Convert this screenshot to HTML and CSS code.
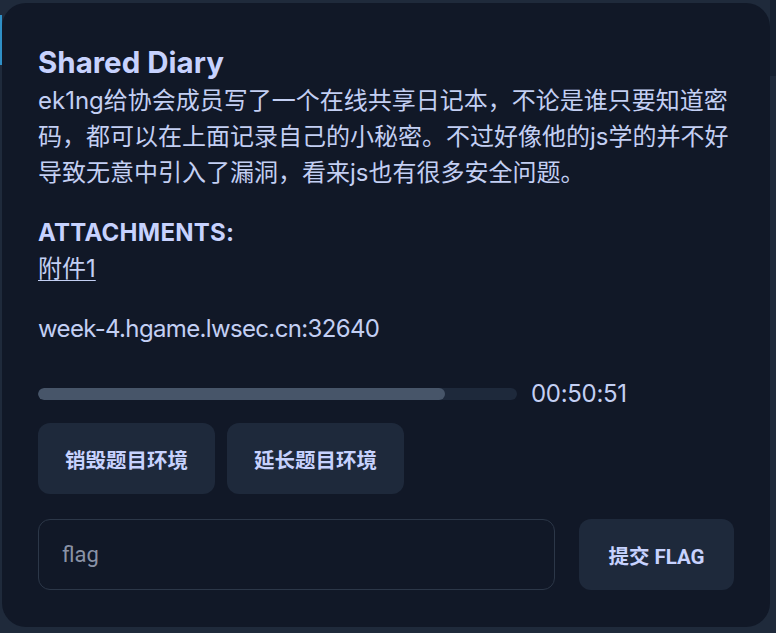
FILE: index.html
```html
<!DOCTYPE html>
<html lang="zh">
<head>
<meta charset="utf-8">
<title>Shared Diary</title>
<link rel="stylesheet" href="styles.css">
</head>
<body>
<div class="card">
  <h1 class="title">Shared Diary</h1>
  <p class="desc">ek1ng给协会成员写了一个在线共享日记本，不论是谁只要知道密码，都可以在上面记录自己的小秘密。不过好像他的js学的并不好导致无意中引入了漏洞，看来js也有很多安全问题。</p>
  <h2 class="att-title">ATTACHMENTS:</h2>
  <a class="att-link" href="#">附件1</a>
  <p class="host">week-4.hgame.lwsec.cn:32640</p>
  <div class="timer-row">
    <div class="track"><div class="fill" style="width:85%"></div></div>
    <span class="time">00:50:51</span>
  </div>
  <div class="btn-row">
    <button class="btn">销毁题目环境</button>
    <button class="btn">延长题目环境</button>
  </div>
  <div class="flag-row">
    <input class="flag-input" type="text" placeholder="flag">
    <button class="btn submit">提交 FLAG</button>
  </div>
</div>
</body>
</html>
```

FILE: styles.css
```css
html, body {
  margin: 0;
  padding: 0;
}
body {
  width: 776px;
  height: 633px;
  overflow: hidden;
  font-family: Inter, "Noto Sans CJK SC", sans-serif;
  background:
    linear-gradient(#2f8fc6, #2f8fc6) 0 15px / 2px 50px no-repeat,
    linear-gradient(#172131, #172131) 770px 0 / 6px 76px no-repeat,
    #1f2a3b;
  padding: 3px 6px 6px 2px;
  box-sizing: border-box;
}
.card {
  box-sizing: border-box;
  height: 624px;
  background: #111827;
  border-radius: 24px;
  padding: 38px 36px 36px 36px;
  display: flex;
  flex-direction: column;
  align-items: flex-start;
  color: #c3cff3;
}
.title {
  margin: 0;
  font-size: 29.5px;
  line-height: 42px;
  font-weight: 700;
  color: #c7d2fe;
}
.desc {
  margin: 0;
  font-size: 24px;
  line-height: 36px;
  color: #c3cff3;
}
.att-title {
  margin: 24px 0 0;
  font-size: 24px;
  line-height: 36px;
  font-weight: 700;
  letter-spacing: 0.25px;
  color: #c7d2fe;
}
.att-link {
  font-size: 24px;
  line-height: 36px;
  color: #c3cff3;
  text-decoration: underline;
  text-underline-offset: 3px;
  text-decoration-thickness: 1px;
}
.host {
  margin: 24px 0 0;
  font-size: 24px;
  line-height: 36px;
  letter-spacing: -0.65px;
  color: #c3cff3;
}
.timer-row {
  margin-top: 29px;
  display: flex;
  align-items: center;
  gap: 14px;
}
.track {
  width: 479px;
  height: 12px;
  border-radius: 6px;
  background: #1e293b;
  overflow: hidden;
}
.fill {
  height: 100%;
  border-radius: 6px;
  background: #475569;
}
.time {
  font-size: 24px;
  line-height: 36px;
  letter-spacing: -0.3px;
  color: #c3cff3;
}
.btn-row {
  margin-top: 11px;
  display: flex;
  gap: 12px;
}
.btn {
  height: 71px;
  padding: 0 27px;
  border: none;
  border-radius: 12px;
  background: #1e293b;
  color: #c7d2fe;
  font-family: Roboto, "Noto Sans CJK SC", sans-serif;
  font-size: 20.5px;
  font-weight: 700;
}
.flag-row {
  margin-top: 25px;
  display: flex;
  gap: 24px;
  width: 100%;
}
.flag-input {
  box-sizing: border-box;
  width: 517px;
  height: 71px;
  border: 1px solid #2c3748;
  border-radius: 12px;
  background: #111827;
  padding: 0 23px;
  font-family: Roboto, "Noto Sans CJK SC", sans-serif;
  font-size: 22px;
  color: #c3cff3;
  outline: none;
}
.flag-input::placeholder {
  color: #8a93a6;
}
.submit {
  width: 155px;
  padding: 0;
}
```
